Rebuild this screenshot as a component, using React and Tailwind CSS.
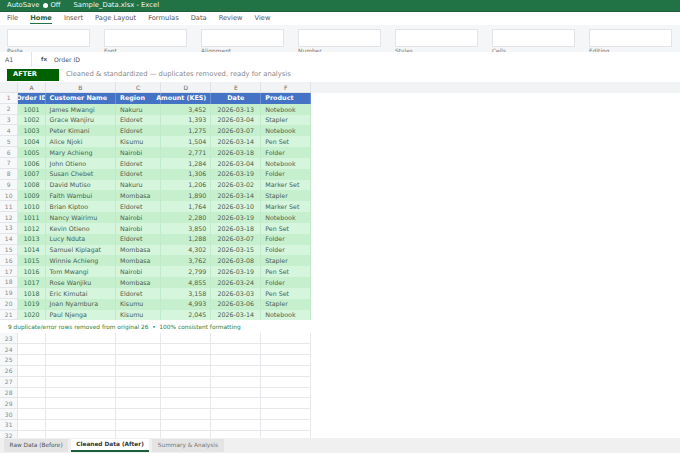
const TABS = ["File", "Home", "Insert", "Page Layout", "Formulas", "Data", "Review", "View"];
const GROUPS = ["Paste", "Font", "Alignment", "Number", "Styles", "Cells", "Editing"];
const COLS = ["A", "B", "C", "D", "E", "F"];
const COL_W = ["w-[27.3px]", "w-[70.4px]", "w-[45.3px]", "w-[50px]", "w-[50px]", "w-[50px]"];
const HEAD = ["Order ID", "Customer Name", "Region", "Amount (KES)", "Date", "Product"];

const ROWS = [
  ["1001", "James Mwangi", "Nakuru", "3,452", "2026-03-13", "Notebook"],
  ["1002", "Grace Wanjiru", "Eldoret", "1,393", "2026-03-04", "Stapler"],
  ["1003", "Peter Kimani", "Eldoret", "1,275", "2026-03-07", "Notebook"],
  ["1004", "Alice Njoki", "Kisumu", "1,504", "2026-03-14", "Pen Set"],
  ["1005", "Mary Achieng", "Nairobi", "2,771", "2026-03-18", "Folder"],
  ["1006", "John Otieno", "Eldoret", "1,284", "2026-03-04", "Notebook"],
  ["1007", "Susan Chebet", "Eldoret", "1,306", "2026-03-19", "Folder"],
  ["1008", "David Mutiso", "Nakuru", "1,206", "2026-03-02", "Marker Set"],
  ["1009", "Faith Wambui", "Mombasa", "1,890", "2026-03-14", "Stapler"],
  ["1010", "Brian Kiptoo", "Eldoret", "1,764", "2026-03-10", "Marker Set"],
  ["1011", "Nancy Wairimu", "Nairobi", "2,280", "2026-03-19", "Notebook"],
  ["1012", "Kevin Otieno", "Nairobi", "3,850", "2026-03-18", "Pen Set"],
  ["1013", "Lucy Nduta", "Eldoret", "1,288", "2026-03-07", "Folder"],
  ["1014", "Samuel Kiplagat", "Mombasa", "4,302", "2026-03-15", "Folder"],
  ["1015", "Winnie Achieng", "Mombasa", "3,762", "2026-03-08", "Stapler"],
  ["1016", "Tom Mwangi", "Nairobi", "2,799", "2026-03-19", "Pen Set"],
  ["1017", "Rose Wanjiku", "Mombasa", "4,855", "2026-03-24", "Folder"],
  ["1018", "Eric Kimutai", "Eldoret", "3,158", "2026-03-03", "Pen Set"],
  ["1019", "Joan Nyambura", "Kisumu", "4,993", "2026-03-06", "Stapler"],
  ["1020", "Paul Njenga", "Kisumu", "2,045", "2026-03-14", "Notebook"],
];

const EMPTY = [23, 24, 25, 26, 27, 28, 29, 30, 31, 32];

function RowNum({ n }) {
  return (
    <div className="w-[18.3px] shrink-0 flex items-center justify-center bg-[#f7f8fa] border-r border-b border-[#e3e5e9] text-[6px] text-[#888]">
      {n}
    </div>
  );
}

function DataRow({ row, n }) {
  const bg = n % 2 === 0 ? "bg-[#c6efce]" : "bg-[#d5f5dc]";
  return (
    <div className="flex h-[10.83px]">
      <RowNum n={n} />
      {row.map((val, i) => (
        <div
          key={i}
          className={`${COL_W[i]} ${bg} shrink-0 flex items-center whitespace-nowrap overflow-hidden text-[6.3px] border-r border-[#c0eacb] ${
            i === 0 ? "justify-center text-[#2f6f40]" : "text-[#4a5f50]"
          } ${i === 4 ? "justify-center" : i === 3 ? "justify-end pr-[4px]" : i === 0 ? "" : "pl-[4px]"}`}
        >
          {val}
        </div>
      ))}
    </div>
  );
}

export default function App() {
  return (
    <div className="w-[680px] h-[453px] overflow-hidden bg-white flex flex-col font-['DejaVu_Sans',sans-serif]">
      <div className="h-[12px] bg-[#217346] border-b border-[#1b5e39] flex items-center pl-[7px] text-[6.8px] text-[#f2f7f4] shrink-0">
        <span>AutoSave</span>
        <span className="ml-[4px] w-[5px] h-[5px] rounded-full bg-white" />
        <span className="ml-[2px]">Off</span>
        <span className="ml-[13px]">Sample_Data.xlsx - Excel</span>
      </div>

      <div className="h-[13px] flex items-center pl-[7px] gap-[12px] text-[6.7px] text-[#555] shrink-0">
        {TABS.map((t) => (
          <span
            key={t}
            className={t === "Home" ? "text-[#2a5f42] font-bold border-b border-[#217346] leading-[10px]" : ""}
          >
            {t}
          </span>
        ))}
      </div>

      <div className="h-[27px] bg-[#f5f6f8] flex gap-[14px] pl-[7px] pt-[4px] overflow-hidden shrink-0">
        {GROUPS.map((g) => (
          <div key={g} className="w-[83px] shrink-0">
            <div className="h-[18px] bg-white border border-[#e2e4e8]" />
            <div className="text-[5.9px] leading-[9px] text-[#777]">{g}</div>
          </div>
        ))}
      </div>

      <div className="h-[15px] flex items-center bg-white text-[6.2px] text-[#555] shrink-0">
        <div className="w-[32px] h-full pl-[5px] flex items-center border-r border-[#e2e4e8]">A1</div>
        <span className="ml-[9px] text-[5.5px] font-bold">fx</span>
        <span className="ml-[7px]">Order ID</span>
      </div>

      <div className="h-[15px] flex items-center pl-[7px] text-[6.8px] text-[#888] shrink-0">
        <div className="w-[52px] h-[12px] bg-[#006100] text-white font-bold text-[6.7px] flex items-center pl-[6px]">AFTER</div>
        <span className="ml-[7px]">Cleaned &amp; standardized — duplicates removed, ready for analysis</span>
      </div>

      <div className="flex h-[11px] bg-[#f1f3f5] shrink-0">
        <div className="w-[18.3px] border-r border-b border-[#e0e2e6]" />
        {COLS.map((c, i) => (
          <div
            key={c}
            className={`${COL_W[i]} flex items-center justify-center border-r border-b border-[#e0e2e6] text-[6px] text-[#666]`}
          >
            {c}
          </div>
        ))}
      </div>

      <div className="flex h-[10.83px] shrink-0">
        <RowNum n={1} />
        {HEAD.map((h, i) => (
          <div
            key={h}
            className={`${COL_W[i]} shrink-0 flex items-center bg-[#4472c4] text-white font-bold text-[6.4px] whitespace-nowrap border-r border-[#6a8fd3] ${
              i === 3 ? "justify-end pr-[4px]" : "overflow-hidden"
            } ${i === 1 || i === 2 || i === 5 ? "pl-[4px]" : i === 3 ? "" : "justify-center"}`}
          >
            {h}
          </div>
        ))}
      </div>

      {ROWS.map((row, i) => (
        <DataRow key={row[0]} row={row} n={i + 2} />
      ))}

      <div className="h-[13px] flex items-center pl-[8px] text-[5.85px] text-[#2e7d32] shrink-0">
        9 duplicate/error rows removed from original 26 &nbsp;•&nbsp; 100% consistent formatting
      </div>

      <div className="flex-1 min-h-0 overflow-hidden">
        {EMPTY.map((n) => (
          <div key={n} className="flex h-[10.83px]">
            <RowNum n={n} />
            {COL_W.map((w, i) => (
              <div key={i} className={`${w} shrink-0 border-r border-b border-[#e6e8ec]`} />
            ))}
          </div>
        ))}
      </div>

      <div className="h-[15px] bg-[#f0f0f0] flex items-start pl-[4px] pt-[1px] gap-[2.5px] text-[5.8px] shrink-0">
        <div className="h-[13px] px-[5.5px] flex items-center bg-[#e4e4e4] text-[#555]">Raw Data (Before)</div>
        <div className="h-[13px] px-[5.5px] flex items-center bg-white text-[#333] font-bold border-b-2 border-[#1b5e39]">Cleaned Data (After)</div>
        <div className="h-[13px] px-[6px] flex items-center bg-[#e4e4e4] text-[#777]">Summary &amp; Analysis</div>
      </div>
    </div>
  );
}
